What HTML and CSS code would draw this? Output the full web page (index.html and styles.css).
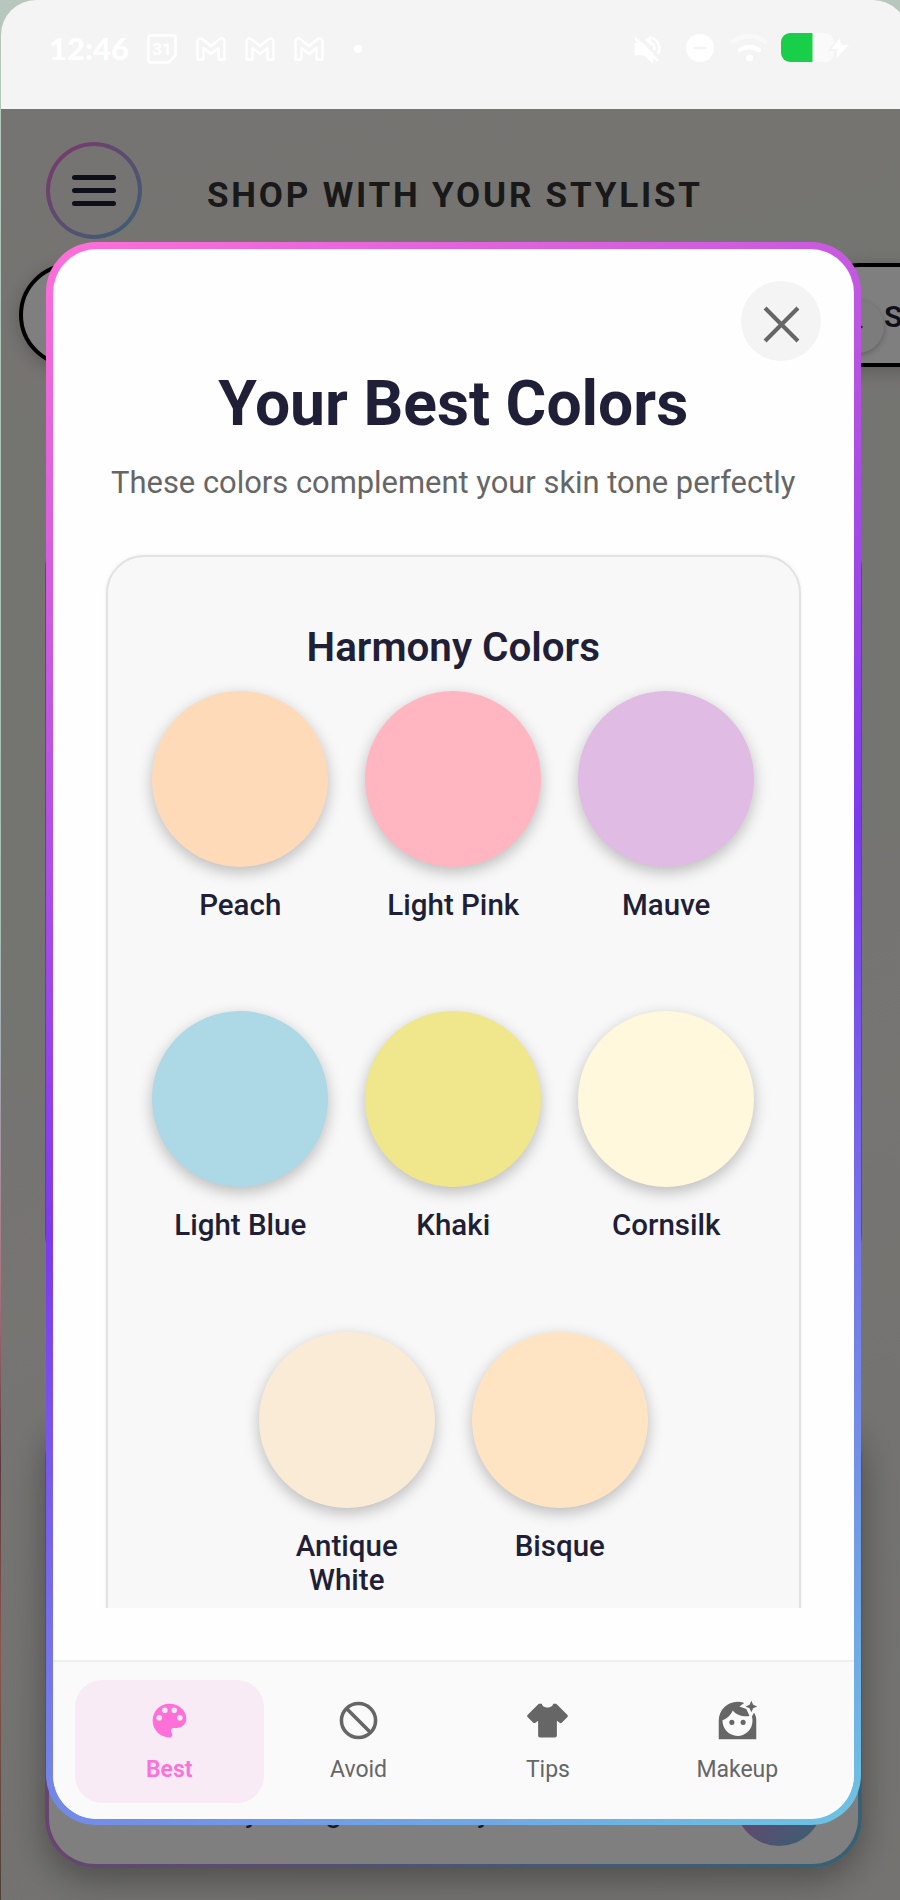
FILE: index.html
```html
<!DOCTYPE html>
<html lang="en">
<head>
    <meta charset="UTF-8">
    <meta name="viewport" content="width=device-width, initial-scale=1.0">
    <title>Your Best Colors</title>
    <link rel="stylesheet" href="styles.css">
</head>
<body>
    <div class="phone">
        <div class="status-bar">
            <div class="status-left">
                <span class="time">12:46</span>
                <svg class="cal-icon" viewBox="0 0 30 30"><path d="M3 1.5h24a1.5 1.5 0 0 1 1.500 1.500v18.500l-7 7H3a1.500 1.500 0 0 1-1.500-1.500V3A1.500 1.500 0 0 1 3 1.500z"/><text x="15" y="21">31</text></svg>
                <svg class="mail-icon" viewBox="0 0 30 24"><path d="M1.500 22.500V4.500c0-3 3-4 5-2.300L15 9l8.500-6.800c2-1.700 5-.7 5 2.300v18h-6V11L15 17 7.500 11v11.500z"/></svg>
                <svg class="mail-icon" viewBox="0 0 30 24"><path d="M1.500 22.500V4.500c0-3 3-4 5-2.300L15 9l8.500-6.800c2-1.700 5-.7 5 2.300v18h-6V11L15 17 7.500 11v11.500z"/></svg>
                <svg class="mail-icon" viewBox="0 0 30 24"><path d="M1.500 22.500V4.500c0-3 3-4 5-2.300L15 9l8.500-6.800c2-1.700 5-.7 5 2.300v18h-6V11L15 17 7.500 11v11.500z"/></svg>
                <span class="dot"></span>
            </div>
            <svg class="status-right" viewBox="0 0 216 32">
                <g class="mute">
                    <path d="M2 11h6l10 10v7l-8-7H2z" fill="#fff"/>
                    <path d="M13 7l3-2v5z" fill="#fff"/>
                    <path d="M1 5l23 23M18 5c7 3 9 10 6 16M17 10c3 1 4 4 3 7"/>
                </g>
                <circle cx="66" cy="15" r="14" fill="#fff"/>
                <path d="M59.500 15h13" stroke="#f4f4f4" stroke-width="2.500"/>
                <path d="M99 8.500c10-7 22-7 32 0" class="wave faint"/>
                <path d="M106 17c6-4 12-4 19 0" class="wave"/>
                <circle cx="115.500" cy="25" r="3.500" fill="#fff"/>
                <rect x="147" y="0" width="53" height="29" rx="9" fill="#fafafa"/>
                <path d="M156 0h22.500v29H156a9 9 0 0 1-9-9V9a9 9 0 0 1 9-9z" fill="#19cf4a"/>
                <path d="M206 5l-8.500 11h6l-1 9 12.500-13h-8z" fill="#fff" stroke="#f4f4f4" stroke-width="4" paint-order="stroke"/>
            </svg>
        </div>

        <div class="screen">
            <div class="app-header">
                <div class="menu-btn">
                    <span></span>
                    <span></span>
                    <span></span>
                </div>
                <div class="app-title">SHOP WITH YOUR STYLIST</div>
            </div>
            <div class="pills">
                <div class="pill"></div>
                <div class="pill second">
                    <div class="pill-chip">
                        <svg viewBox="0 0 12 12"><path d="M2 1l8 5-8 5z"/></svg>
                    </div>
                    <span class="pill-text">S</span>
                </div>
            </div>
            <div class="card card-middle"></div>
            <div class="card card-bottom">
                <div class="card-text"><span>y</span><span>g</span><span>y</span></div>
                <div class="send-btn"></div>
            </div>
            <div class="overlay"></div>
        </div>

        <div class="modal">
            <div class="modal-inner">
                <div class="modal-body">
                    <button class="close-btn">
                        <svg viewBox="0 0 36 36"><path d="M2 2l32 32M34 2L2 34"/></svg>
                    </button>
                    <h1>Your Best Colors</h1>
                    <p class="subtitle">These colors complement your skin tone perfectly</p>
                    <div class="palette">
                        <h2>Harmony Colors</h2>
                        <div class="swatches">
                            <div class="swatch"><div class="circle peach"></div><p>Peach</p></div>
                            <div class="swatch"><div class="circle pink"></div><p>Light Pink</p></div>
                            <div class="swatch"><div class="circle mauve"></div><p>Mauve</p></div>
                            <div class="swatch"><div class="circle blue"></div><p>Light Blue</p></div>
                            <div class="swatch"><div class="circle khaki"></div><p>Khaki</p></div>
                            <div class="swatch"><div class="circle cornsilk"></div><p>Cornsilk</p></div>
                            <div class="swatch"><div class="circle antique"></div><p>Antique White</p></div>
                            <div class="swatch"><div class="circle bisque"></div><p>Bisque</p></div>
                        </div>
                    </div>
                </div>
                <nav class="tabs">
                    <div class="tab active">
                        <svg viewBox="0 0 24 24"><path d="M17.5,12A1.5,1.5 0 0,1 16,10.5A1.5,1.5 0 0,1 17.5,9A1.5,1.5 0 0,1 19,10.5A1.5,1.5 0 0,1 17.5,12M14.5,8A1.5,1.5 0 0,1 13,6.5A1.5,1.5 0 0,1 14.5,5A1.5,1.5 0 0,1 16,6.5A1.5,1.5 0 0,1 14.5,8M9.5,8A1.5,1.5 0 0,1 8,6.5A1.5,1.5 0 0,1 9.5,5A1.5,1.5 0 0,1 11,6.5A1.5,1.5 0 0,1 9.5,8M6.5,12A1.5,1.5 0 0,1 5,10.5A1.5,1.5 0 0,1 6.5,9A1.5,1.5 0 0,1 8,10.5A1.5,1.5 0 0,1 6.5,12M12,3A9,9 0 0,0 3,12A9,9 0 0,0 12,21A1.5,1.5 0 0,0 13.5,19.5C13.5,19.11 13.35,18.76 13.11,18.5C12.88,18.23 12.73,17.88 12.73,17.5A1.5,1.5 0 0,1 14.23,16H16A5,5 0 0,0 21,11C21,6.58 16.97,3 12,3Z"/></svg>
                        <span>Best</span>
                    </div>
                    <div class="tab">
                        <svg viewBox="0 0 24 24"><path class="line" d="M5.600 5.600l12.800 12.800M12 2.900a9.100 9.100 0 1 0 0 18.200 9.100 9.100 0 1 0 0-18.200z"/></svg>
                        <span>Avoid</span>
                    </div>
                    <div class="tab">
                        <svg viewBox="0 0 24 24"><path d="M16,21H8A1,1 0 0,1 7,20V12.07L5.7,13.07C5.31,13.46 4.68,13.46 4.29,13.07L1.46,10.29C1.07,9.9 1.07,9.27 1.46,8.88L7.34,3H9C9,4.1 10.34,5 12,5C13.66,5 15,4.1 15,3H16.66L22.54,8.88C22.93,9.27 22.93,9.9 22.54,10.29L19.71,13.12C19.32,13.5 18.69,13.5 18.3,13.12L17,12.12V20A1,1 0 0,1 16,21Z"/></svg>
                        <span>Tips</span>
                    </div>
                    <div class="tab">
                        <svg viewBox="0 0 24 24"><path fill-rule="evenodd" d="M2 22V12C2 6.500 6.500 2 12 2c1.300 0 2.500.2 3.600.6L13 4.500l3.700 1.400L18.400 9.600C14.800 10.100 11.200 9 9.500 6.600 8.400 9 6.500 11 4 11.900c-.1 4.600 3.500 8.300 8 8.300s8-3.600 8-8.100c0-.8-.1-1.500-.3-2.200L20.800 7.900C21.600 9 22 10.500 22 12v10z"/><circle cx="9" cy="13" r="1.350"/><circle cx="15" cy="13" r="1.350"/><path d="M19.400 1.400l.95 2.150 2.150.95-2.150.95-.95 2.150-.95-2.150-2.150-.95 2.150-.95z"/></svg>
                        <span>Makeup</span>
                    </div>
                </nav>
            </div>
        </div>
    </div>
</body>
</html>
```
FILE: styles.css
```css
* {
    box-sizing: border-box;
}
body {
    margin: 0;
    width: 900px;
    height: 1900px;
    overflow: hidden;
    font-family: Roboto, sans-serif;
    background: linear-gradient(#b7c7bd 0%, #a9bfb2 48%, #a5a9b6 56%, #a8717c 68%, #5b3a40 77%, #8a5652 87%, #4b4038 100%);
}
.phone {
    position: relative;
    width: 907px;
    height: 1900px;
    margin-left: 1px;
    border-radius: 35px 35px 0 0;
    overflow: hidden;
}
.status-bar {
    height: 109px;
    padding: 33px 58px 0 48px;
    display: flex;
    justify-content: space-between;
    align-items: flex-start;
    background: #f4f4f4;
}
.status-left {
    display: flex;
    align-items: center;
    gap: 19px;
    height: 32px;
}
.time {
    width: 79px;
    margin-top: -3px;
    font-family: Lato, sans-serif;
    font-size: 31px;
    font-weight: 900;
    line-height: 32px;
    color: #fff;
}
.cal-icon {
    width: 30px;
    height: 30px;
    fill: none;
    stroke: #fff;
    stroke-width: 2.4;
}
.cal-icon text {
    font-size: 17px;
    font-weight: 700;
    text-anchor: middle;
    fill: #fff;
    stroke: none;
}
.mail-icon {
    width: 30px;
    height: 24px;
    fill: none;
    stroke: #fff;
    stroke-width: 2.4;
    stroke-linejoin: round;
}
.dot {
    width: 8px;
    height: 8px;
    margin-left: 11px;
    border-radius: 50%;
    background: #fff;
}
.status-right {
    width: 216px;
    height: 32px;
    fill: none;
}
.mute {
    stroke: #fff;
    stroke-width: 2.5;
}
.wave {
    stroke: #fff;
    stroke-width: 4.5;
    stroke-linecap: round;
}
.wave.faint {
    stroke: #f9f9f9;
}

/* page behind the modal */
.screen {
    position: relative;
    height: 1791px;
    overflow: hidden;
    background: linear-gradient(165deg, #ebe9e4, #e8e8e3 40%, #edeae5 60%, #e6e5e1 85%, #e9e7e2);
}
.overlay {
    position: absolute;
    inset: 0;
    background: rgba(0, 0, 0, 0.5);
}
.app-header {
    display: flex;
    align-items: center;
    padding: 33px 0 0 45px;
}
.menu-btn {
    width: 96px;
    height: 97px;
    border: 4px solid transparent;
    border-radius: 50%;
    display: flex;
    flex-direction: column;
    align-items: center;
    justify-content: center;
    gap: 8px;
    background: linear-gradient(#ebe9e4, #ebe9e4) padding-box, linear-gradient(135deg, #ff6fd8, #6cc4e8) border-box;
}
.menu-btn span {
    width: 44px;
    height: 5px;
    border-radius: 3px;
    background: #1f1f38;
}
.app-title {
    margin: 9px 0 0 65px;
    font-size: 35px;
    font-weight: 700;
    letter-spacing: 2.8px;
    color: #333;
    white-space: nowrap;
}
.pills {
    display: flex;
    gap: 24px;
    padding: 24px 0 0 18px;
}
.pill {
    width: 765px;
    height: 104px;
    flex-shrink: 0;
    border: 4.5px solid #000;
    border-radius: 52px;
    background: #fff;
    box-shadow: 0 4px 18px rgba(0, 0, 0, 0.22);
}
.pill.second {
    display: flex;
    align-items: center;
    gap: 0;
    padding-left: 19px;
}
.pill-chip {
    width: 53px;
    height: 53px;
    margin-top: 23px;
    display: flex;
    align-items: center;
    justify-content: center;
    border-radius: 50%;
    background: #f8f8f8;
    box-shadow: 0 2px 6px rgba(0, 0, 0, 0.25);
}
.pill-chip svg {
    width: 16px;
    height: 16px;
    fill: #444;
}
.pill-text {
    margin-top: 3px;
    font-size: 30px;
    font-weight: 600;
    color: #1f1f38;
}
.card {
    position: absolute;
    left: 44px;
    width: 817px;
    border: 4px solid transparent;
    border-radius: 50px;
    background: linear-gradient(#fff, #fff) padding-box, linear-gradient(135deg, #ff6fd8, #6cc4e8) border-box;
}
.card-middle {
    top: 410px;
    height: 764px;
}
.card-bottom {
    top: 1300px;
    height: 459px;
    box-shadow: 0 12px 34px rgba(0, 0, 0, 0.32);
    display: flex;
    align-items: flex-end;
    justify-content: space-between;
    padding: 0 35px 18px 196px;
}
.card-text {
    display: flex;
    gap: 66px;
    padding-bottom: 17px;
    font-size: 30px;
    color: #333;
}
.card-text span:last-child {
    margin-left: 69px;
}
.send-btn {
    width: 88px;
    height: 88px;
    border-radius: 50%;
    background: linear-gradient(135deg, #ff6fd8, #6cc4e8);
}

/* modal */
.modal {
    position: absolute;
    top: 242px;
    left: 45px;
    width: 814.5px;
    height: 1583px;
    padding: 6.5px;
    border-radius: 50px;
    background: linear-gradient(152.8deg, #ff6fd8, #7c3aed 50%, #6cc4e3);
}
.modal-inner {
    height: 100%;
    display: flex;
    flex-direction: column;
    border-radius: 44px;
    overflow: hidden;
    background: #fefefe;
}
.modal-body {
    height: 1359px;
    padding: 0 53px;
    overflow: hidden;
}
.close-btn {
    display: flex;
    align-items: center;
    justify-content: center;
    width: 80px;
    height: 80px;
    margin: 32px -20px 0 auto;
    padding: 7px 0 0;
    border: none;
    border-radius: 50%;
    background: #f4f4f4;
}
.close-btn svg {
    width: 37px;
    height: 37px;
    fill: none;
    stroke: #666;
    stroke-width: 4;
}
h1 {
    margin: 7px 0 0;
    font-size: 62.4px;
    font-weight: 700;
    line-height: 72px;
    text-align: center;
    color: #1f1f38;
}
.subtitle {
    margin: 24.5px -20px 0;
    font-size: 30.9px;
    line-height: 38px;
    text-align: center;
    white-space: nowrap;
    color: #666;
}
.palette {
    height: 1200px;
    margin-top: 53px;
    padding: 65.5px 24px 0;
    border: 2.5px solid #e2e2e2;
    border-radius: 38px;
    background: #f8f8f8;
    box-shadow: 0 0 4px rgba(0, 0, 0, 0.06);
}
h2 {
    margin: 0;
    font-size: 40.4px;
    font-weight: 600;
    line-height: 50px;
    text-align: center;
    color: #1f1f38;
}
.swatches {
    display: flex;
    flex-wrap: wrap;
    justify-content: center;
    margin-top: 18px;
}
.swatch {
    width: 213px;
    height: 320.6px;
    display: flex;
    flex-direction: column;
    align-items: center;
}
.circle {
    width: 176px;
    height: 176px;
    flex-shrink: 0;
    border-radius: 50%;
    box-shadow: 0 5px 15px rgba(0, 0, 0, 0.25);
}
.swatch p {
    width: 150px;
    margin: 21px 0 0;
    font-size: 29.5px;
    font-weight: 500;
    line-height: 34px;
    text-align: center;
    color: #1f1f38;
}
.peach { background: #ffdab9; }
.pink { background: #ffb6c1; }
.mauve { background: #e0bbe4; }
.blue { background: #add8e6; }
.khaki { background: #f0e68c; }
.cornsilk { background: #fff8dc; }
.antique { background: #faebd7; }
.bisque { background: #ffe4c4; }

.tabs {
    flex: 1;
    display: flex;
    margin-top: 52.5px;
    padding: 18px 22px 16px;
    border-top: 2.5px solid #efefef;
    background: #fafafa;
}
.tab {
    flex: 1;
    display: flex;
    flex-direction: column;
    align-items: center;
    padding-top: 17.5px;
    border-radius: 27px;
    font-size: 23px;
    line-height: 28px;
    color: #666;
}
.tab svg {
    width: 45px;
    height: 45px;
    margin-bottom: 13px;
    fill: #666;
}
.tab .line {
    fill: none;
    stroke: #666;
    stroke-width: 1.9;
}
.tab.active {
    background: #f9ebf6;
    color: #ff6fd8;
    font-weight: 600;
}
.tab.active svg {
    fill: #ff6fd8;
}
```
